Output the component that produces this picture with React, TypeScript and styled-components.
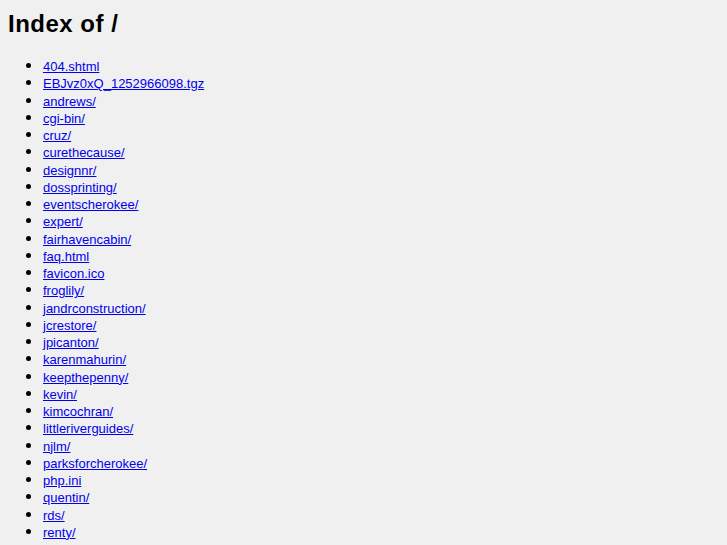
import React from 'react';
import styled, { createGlobalStyle } from 'styled-components';

const GlobalStyle = createGlobalStyle`
  html, body {
    margin: 0;
    padding: 0;
    background-color: #f0f0f0;
    overflow: hidden;
  }
  body {
    font-family: "Liberation Sans", Arial, sans-serif;
    color: #000;
  }
`;

// Page container
const Page = styled.div`
  padding: 10px 8px 0 8px;
`;

const Title = styled.h1`
  font-size: 24px;
  font-weight: bold;
  line-height: 28px;
  margin: 0 0 20px 0;
  letter-spacing: 0.5px;
`;

const List = styled.ul`
  margin: 0;
  padding-left: 35px;
  list-style: none;
`;

// bullet drawn larger than the default disc
const Item = styled.li`
  font-size: 13px;
  line-height: 17.25px;

  &::before {
    content: '';
    display: inline-block;
    width: 5px;
    height: 5px;
    border-radius: 50%;
    background: #000;
    margin-left: -17px;
    margin-right: 12px;
    vertical-align: 3px;
  }
`;

const Link = styled.a`
  color: #0000ee;
  text-decoration: underline;
`;

const entries = [
  '404.shtml',
  'EBJvz0xQ_1252966098.tgz',
  'andrews/',
  'cgi-bin/',
  'cruz/',
  'curethecause/',
  'designnr/',
  'dossprinting/',
  'eventscherokee/',
  'expert/',
  'fairhavencabin/',
  'faq.html',
  'favicon.ico',
  'froglily/',
  'jandrconstruction/',
  'jcrestore/',
  'jpicanton/',
  'karenmahurin/',
  'keepthepenny/',
  'kevin/',
  'kimcochran/',
  'littleriverguides/',
  'njlm/',
  'parksforcherokee/',
  'php.ini',
  'quentin/',
  'rds/',
  'renty/',
];

export default function App() {
  return (
    <>
      <GlobalStyle />
      <Page>
        <Title>Index of /</Title>
        <List>
          {entries.map((name) => (
            <Item key={name}>
              <Link href={'/' + name}>{name}</Link>
            </Item>
          ))}
        </List>
      </Page>
    </>
  );
}
